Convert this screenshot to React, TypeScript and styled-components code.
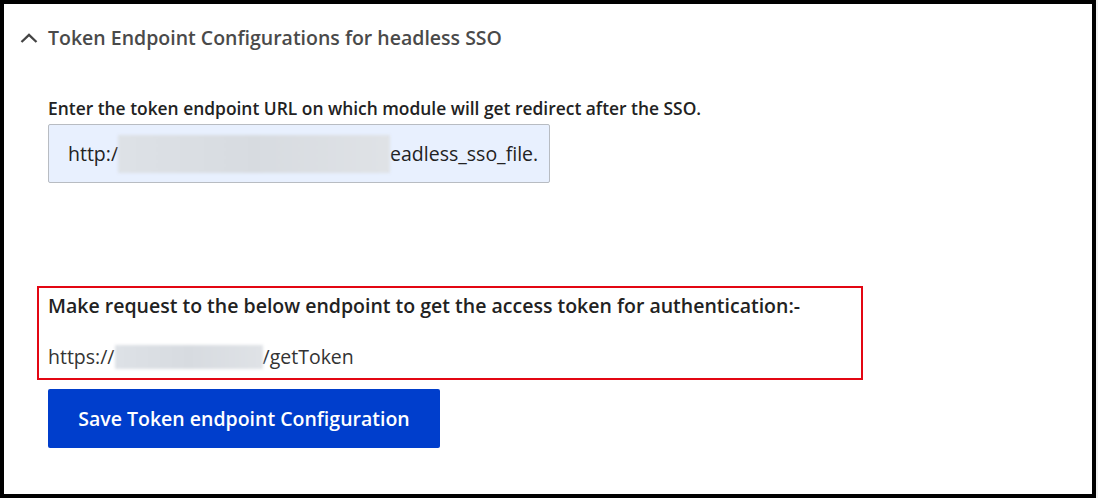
import React from 'react'
import styled, { createGlobalStyle } from 'styled-components'

const GlobalStyle = createGlobalStyle`
	html, body {
		margin: 0;
		padding: 0;
		background: #f2f2f2;
	}
	body {
		font-family: 'Open Sans', 'Liberation Sans', sans-serif;
	}
`

const Frame = styled.div`
	box-sizing: border-box;
	width: 1096px;
	height: 498px;
	border: 4px solid #000;
	background: #fff;
	display: flex;
	flex-direction: column;
`

const Header = styled.div`
	display: flex;
	align-items: center;
	gap: 10px;
	height: 68px;
	padding-left: 16px;
`

const Title = styled.h2`
	margin: 0;
	font-size: 19.5px;
	line-height: 24px;
	font-weight: 600;
	color: #4a4a4a;
`

const Body = styled.div`
	display: flex;
	flex-direction: column;
	align-items: flex-start;
	padding: 0 0 0 44px;
`

const Label = styled.label`
	margin-top: 26px;
	font-size: 17.4px;
	line-height: 20px;
	font-weight: 600;
	color: #222;
	white-space: nowrap;
`

const FakeInput = styled.div`
	box-sizing: border-box;
	margin-top: 6px;
	width: 502px;
	height: 59px;
	display: flex;
	align-items: center;
	padding-left: 19px;
	background: #e8f0fe;
	border: 1px solid #b8bcc2;
	border-radius: 2px;
	font-size: 19.5px;
	color: #222;
	white-space: nowrap;
	overflow: hidden;
`

const Redacted = styled.span<{ $w: number; $h: number }>`
	display: inline-block;
	flex: none;
	width: ${(p) => p.$w}px;
	height: ${(p) => p.$h}px;
	background: linear-gradient(90deg, #dde1e6, #d7dbe0 50%, #dfe2e6);
	filter: blur(1.5px);
`

const Highlight = styled.div`
	box-sizing: border-box;
	margin-top: 103px;
	margin-left: -11px;
	width: 826px;
	padding: 8px 0 11px 9px;
	border: 2px solid #e30613;
	display: flex;
	flex-direction: column;
	gap: 31px;
`

const Notice = styled.p`
	margin: 0;
	font-size: 19.5px;
	line-height: 20px;
	font-weight: 600;
	color: #222;
	white-space: nowrap;
`

const Endpoint = styled.div`
	display: flex;
	align-items: center;
	height: 20px;
	font-size: 19.5px;
	line-height: 20px;
	color: #333;
`

const SaveButton = styled.button`
	margin-top: 9px;
	width: 392px;
	height: 59px;
	border: none;
	border-radius: 2px;
	background: #003ecc;
	color: #fff;
	font-family: inherit;
	font-size: 19.5px;
	font-weight: 600;
	cursor: pointer;
`

const Chevron = () => (
	<svg width="18" height="12" viewBox="0 0 18 12" fill="none">
		<path d="M1.5 10 L9 2.8 L16.5 10" stroke="#444" strokeWidth="2.3" />
	</svg>
)

export default function App() {
	return (
		<>
			<GlobalStyle />
			<Frame>
				<Header>
					<Chevron />
					<Title>Token Endpoint Configurations for headless SSO</Title>
				</Header>
				<Body>
					<Label>Enter the token endpoint URL on which module will get redirect after the SSO.</Label>
					<FakeInput>
						http:/
						<Redacted $w={272} $h={38} />
						eadless_sso_file.
					</FakeInput>
					<Highlight>
						<Notice>Make request to the below endpoint to get the access token for authentication:-</Notice>
						<Endpoint>
							https://
							<Redacted $w={148} $h={24} />
							/getToken
						</Endpoint>
					</Highlight>
					<SaveButton>Save Token endpoint Configuration</SaveButton>
				</Body>
			</Frame>
		</>
	)
}
